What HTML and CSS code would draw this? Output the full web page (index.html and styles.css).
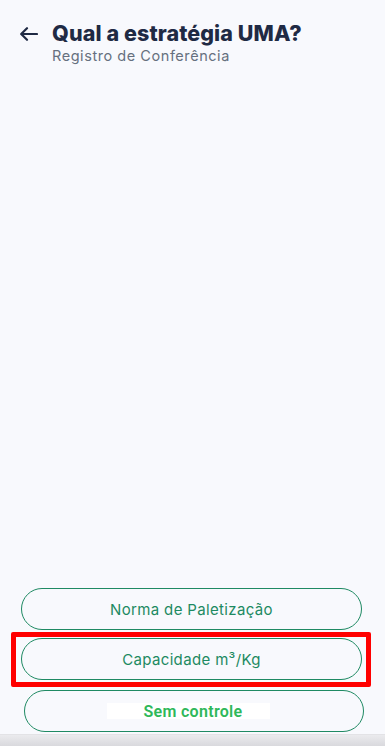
FILE: index.html
```html
<!DOCTYPE html>
<html lang="pt-BR">
<head>
<meta charset="utf-8">
<title>Qual a estratégia UMA?</title>
<link rel="stylesheet" href="styles.css">
</head>
<body>
<div class="screen">
  <header class="header">
    <button class="back" aria-label="Voltar">
      <svg width="18" height="14" viewBox="0 0 18 14" fill="none" stroke="#1f2a44" stroke-width="2.2" stroke-linecap="round" stroke-linejoin="round">
        <path d="M17 7H1.5M7 1.2L1.2 7L7 12.8"/>
      </svg>
    </button>
    <div class="titles">
      <h1 class="title">Qual a estratégia UMA?</h1>
      <p class="subtitle">Registro de Conferência</p>
    </div>
  </header>
  <main class="spacer"></main>
  <section class="actions">
    <button class="option">Norma de Paletização</button>
    <div class="highlight-wrap">
      <button class="option">Capacidade m³/Kg</button>
      <span class="highlight"></span>
    </div>
    <button class="option option-last"><span class="label-box">Sem controle</span></button>
  </section>
  <div class="navbar"></div>
</div>
</body>
</html>
```
FILE: styles.css
```css
* { box-sizing: border-box; }
html, body {
  margin: 0;
  padding: 0;
  background: #f8f9fd;
}
.screen {
  width: 385px;
  height: 746px;
  display: flex;
  flex-direction: column;
  font-family: Inter, "Noto Sans", sans-serif;
}
.header {
  display: flex;
  align-items: flex-start;
  padding: 21px 0 0 20px;
}
.back {
  border: 0;
  background: transparent;
  padding: 0;
  margin: 6px 14px 0 0;
  width: 18px;
  height: 14px;
  display: flex;
}
.titles { display: flex; flex-direction: column; }
.title {
  margin: 0;
  font-size: 21.5px;
  line-height: 24px;
  font-weight: 800;
  color: #1f2a44;
  letter-spacing: 0.1px;
}
.subtitle {
  margin: 2px 0 0 0;
  font-size: 14.5px;
  line-height: 18px;
  color: #66707f;
  letter-spacing: 0.55px;
}
.spacer { flex: 1; }
.actions {
  display: flex;
  flex-direction: column;
  padding: 0 23px 2px 21px;
}
.option {
  height: 42px;
  width: 341px;
  border: 1px solid #1f8a63;
  border-radius: 21px;
  background: transparent;
  color: #1d8a62;
  font-family: Inter, "Noto Sans", sans-serif;
  font-size: 15px;
  font-weight: 400;
  letter-spacing: 0.35px;
  display: flex;
  align-items: center;
  justify-content: center;
  padding: 0;
}
.highlight-wrap {
  position: relative;
  margin-top: 8px;
}
.highlight {
  position: absolute;
  left: -10px;
  right: -9px;
  top: -6px;
  bottom: -7px;
  border: 5px solid #ff0000;
  border-radius: 2px;
  pointer-events: none;
}
.option-last {
  margin-top: 10px;
  margin-left: 3px;
  width: 340px;
}
.label-box {
  background: #ffffff;
  width: 163px;
  height: 16px;
  display: flex;
  align-items: center;
  justify-content: center;
  padding-left: 9px;
  color: #2fb85a;
  font-family: "Roboto", sans-serif;
  font-weight: 600;
  font-size: 16px;
  letter-spacing: 0.3px;
  margin-left: -11px;
}
.navbar {
  height: 12px;
  background: linear-gradient(#ebebee, #d9d9dd);
  border-top: 1px solid #e3e3e6;
}
```
